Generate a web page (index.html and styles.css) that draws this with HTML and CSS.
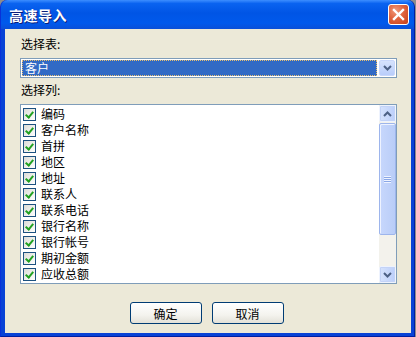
FILE: index.html
```html
<!DOCTYPE html>
<html lang="zh-CN">
<head>
  <meta charset="UTF-8" />
  <title>高速导入</title>
  <link rel="stylesheet" href="styles.css">
</head>
<body>
  <div class="window">
    <!-- Title bar -->
    <div class="titlebar">
      <span class="title">高速导入</span>
      <div class="close-btn">
        <svg width="13" height="13" viewBox="0 0 13 13">
          <path d="M2 2 L11 11 M11 2 L2 11" stroke="#fff" stroke-width="2.4" stroke-linecap="square"/>
        </svg>
      </div>
    </div>

    <!-- Client area -->
    <div class="client">
      <div class="label">选择表:</div>
      <div class="combo">
        <div class="combo-value"><span>客户</span></div>
        <div class="combo-btn">
          <svg width="9" height="6" viewBox="0 0 9 6">
            <path d="M1 1 L4.5 4.5 L8 1" stroke="#4d6185" stroke-width="2" fill="none"/>
          </svg>
        </div>
      </div>

      <div class="label label-cols">选择列:</div>
      <div class="listbox">
        <ul class="items">
          <li><span class="chk"></span><span class="txt">编码</span></li>
          <li><span class="chk"></span><span class="txt">客户名称</span></li>
          <li><span class="chk"></span><span class="txt">首拼</span></li>
          <li><span class="chk"></span><span class="txt">地区</span></li>
          <li><span class="chk"></span><span class="txt">地址</span></li>
          <li><span class="chk"></span><span class="txt">联系人</span></li>
          <li><span class="chk"></span><span class="txt">联系电话</span></li>
          <li><span class="chk"></span><span class="txt">银行名称</span></li>
          <li><span class="chk"></span><span class="txt">银行帐号</span></li>
          <li><span class="chk"></span><span class="txt">期初金额</span></li>
          <li><span class="chk"></span><span class="txt">应收总额</span></li>
        </ul>
        <div class="scrollbar">
          <div class="sb-btn">
            <svg width="9" height="6" viewBox="0 0 9 6">
              <path d="M1 5 L4.5 1.5 L8 5" stroke="#4d6185" stroke-width="2" fill="none"/>
            </svg>
          </div>
          <div class="sb-track">
            <div class="sb-thumb">
              <span class="grip"></span>
            </div>
          </div>
          <div class="sb-btn">
            <svg width="9" height="6" viewBox="0 0 9 6">
              <path d="M1 1 L4.5 4.5 L8 1" stroke="#4d6185" stroke-width="2" fill="none"/>
            </svg>
          </div>
        </div>
      </div>

      <div class="buttons">
        <button class="btn">确定</button>
        <button class="btn">取消</button>
      </div>
    </div>
  </div>
</body>
</html>
```

FILE: styles.css
```css
/* ------------------------------
   BASE
------------------------------- */
* {
  margin: 0;
  padding: 0;
  box-sizing: border-box;
}
body {
  width: 416px;
  height: 337px;
  overflow: hidden;
  background: #8c8c8c;
  font-family: "Noto Sans CJK SC", "Liberation Sans", sans-serif;
  font-size: 12px;
  color: #000;
}

/* ------------------------------
   WINDOW FRAME
------------------------------- */
.window {
  width: 415px;
  height: 337px;
  display: flex;
  flex-direction: column;
  background: #0842d6;
  border-radius: 7px 7px 0 0;
  padding: 0 3px 3px 4px;
  border-left: 1px solid #0831d9;
  border-right: 1px solid #001ea0;
  border-bottom: 1px solid #001ea0;
}
.titlebar {
  height: 29px;
  margin: 0 -3px 0 -4px;
  display: flex;
  align-items: center;
  justify-content: space-between;
  padding: 0 5px 0 8px;
  border-radius: 7px 7px 0 0;
  background: linear-gradient(to bottom, #3d8eff 0%, #0a63f0 12%, #0055e5 45%, #0059ec 80%, #0a4fd8 100%);
}
.title {
  color: #fff;
  font-weight: bold;
  font-size: 14px;
  letter-spacing: 0.5px;
  text-shadow: 1px 1px 0 #0a1e7a;
  padding-top: 1px;
}
.close-btn {
  width: 21px;
  height: 21px;
  border: 1px solid #fff;
  border-radius: 3px;
  background: radial-gradient(circle at 35% 30%, #f09a7c, #e0643f 45%, #c53d17 100%);
  display: flex;
  align-items: center;
  justify-content: center;
}

/* ------------------------------
   CLIENT AREA
------------------------------- */
.client {
  flex: 1;
  background: #ece9d8;
  padding: 8px 14px 0 15px;
  display: flex;
  flex-direction: column;
}
.label {
  height: 14px;
  line-height: 14px;
  padding-left: 1px;
}
.combo {
  margin-top: 7px;
  height: 20px;
  border: 1px solid #7f9db9;
  background: #fff;
  display: flex;
  padding: 1px;
}
.combo-value {
  flex: 1;
  background: #316ac5;
  color: #fff;
  border: 1px dotted #e8c070;
  line-height: 14px;
  padding-left: 2px;
  margin-right: 2px;
}
.combo-btn {
  width: 16px;
  background: linear-gradient(to bottom, #d6e3fd, #b9cdfa);
  border: 1px solid #c8d7fb;
  border-radius: 2px;
  display: flex;
  align-items: center;
  justify-content: center;
}
.label-cols {
  margin-top: 5px;
}

/* List with checkboxes */
.listbox {
  margin-top: 7px;
  height: 180px;
  border: 1px solid #7f9db9;
  background: #fff;
  display: flex;
}
.items {
  flex: 1;
  list-style: none;
  padding: 1px 0 0 2px;
}
.items li {
  height: 16px;
  display: flex;
  align-items: center;
}
.txt {
  font-size: 12px;
  line-height: 14px;
}
.chk {
  width: 13px;
  height: 13px;
  margin-right: 5px;
  border: 1px solid #1c5180;
  background: linear-gradient(135deg, #dcdcd7, #fff);
  position: relative;
}
.chk::after {
  content: "";
  position: absolute;
  left: 3px;
  top: 1px;
  width: 3px;
  height: 6px;
  border-right: 2px solid #21a121;
  border-bottom: 2px solid #21a121;
  transform: rotate(40deg);
}

/* Scrollbar */
.scrollbar {
  width: 17px;
  display: flex;
  flex-direction: column;
  background: #f3f2ec;
}
.sb-btn {
  height: 17px;
  background: linear-gradient(to right, #d6e3fd, #bccffa);
  border: 1px solid #eef3fe;
  border-radius: 2px;
  display: flex;
  align-items: center;
  justify-content: center;
  outline: 1px solid #c3d3f7;
  outline-offset: -2px;
}
.sb-track {
  flex: 1;
  padding: 1px 0 31px;
}
.sb-thumb {
  height: 100%;
  background: linear-gradient(to right, #c7d7fc, #b9cdf8);
  border: 1px solid #9db5ec;
  border-radius: 2px;
  box-shadow: inset 1px 1px 0 #eef3ff;
  display: flex;
  align-items: center;
  justify-content: center;
}
.grip {
  width: 7px;
  height: 7px;
  background: repeating-linear-gradient(to bottom, #eef3ff 0 1px, #8aa7e6 1px 2px);
}

/* Buttons */
.buttons {
  margin-top: 18px;
  display: flex;
  justify-content: center;
  gap: 10px;
  padding-right: 4px;
}
.btn {
  width: 72px;
  height: 22px;
  border: 1px solid #003c74;
  border-radius: 3px;
  background: linear-gradient(to bottom, #fff 0%, #f4f3ee 60%, #e3e1d8 100%);
  font-family: "Noto Sans CJK SC", "Liberation Sans", sans-serif;
  font-size: 12px;
  color: #000;
}
```
